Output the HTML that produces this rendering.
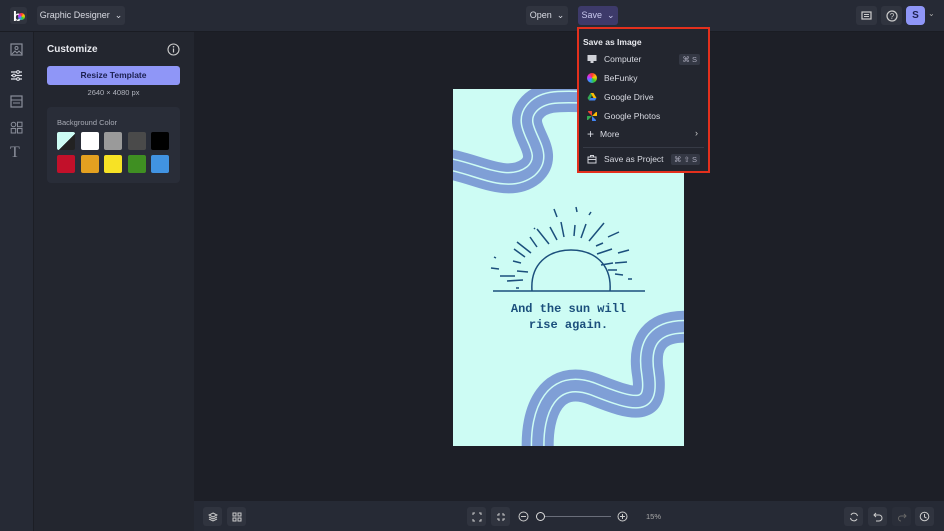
<!DOCTYPE html>
<html><head><meta charset="utf-8"><style>
*{margin:0;padding:0;box-sizing:border-box}
body{width:944px;height:531px;overflow:hidden;background:#1d1f27;font-family:"Liberation Sans",sans-serif;color:#d8dae2;position:relative}
.abs{position:absolute}
.top{left:0;top:0;width:944px;height:32px;background:#262a35;border-bottom:1px solid #1a1c23}
.btn{background:#30343f;border-radius:3px;font-size:9px;color:#d8dae2;display:flex;align-items:center;justify-content:center}
.rail{left:0;top:32px;width:34px;height:499px;background:#262a35;border-right:1px solid #1c1e25}
.panel{left:34px;top:32px;width:160px;height:499px;background:#23262f}
.bottom{left:194px;top:501px;width:750px;height:30px;background:#262a35}
.sw{position:absolute;width:18px;height:18px;border-radius:2px}
.menu{left:577px;top:27px;width:133px;height:146px;border:2px solid #e3301d;background:#23262f}
.mi{position:absolute;left:8px;font-size:8.5px;color:#d8dae2;display:flex;align-items:center}
.ic{width:10px;height:10px;margin-right:7px;display:inline-block}
.kb{position:absolute;right:8px;font-size:7.5px;background:#343844;color:#aab;padding:1px 3px;border-radius:2px}
svg{display:block}
</style></head><body>
<div class="abs top"></div>
<div class="abs" style="left:10px;top:7px;width:17px;height:17px;border-radius:3px;background:#30343f"></div>
<div class="abs" style="left:13px;top:9px;font-size:14px;font-weight:bold;color:#fff;line-height:14px">b</div>
<div class="abs" style="left:18px;top:13px;width:7px;height:7px;border-radius:50%;background:conic-gradient(#f33,#fc0,#3c3,#39f,#c3f,#f33)"></div>
<div class="abs btn" style="left:37px;top:6px;width:88px;height:19px">Graphic Designer &nbsp;⌄</div>
<div class="abs btn" style="left:526px;top:6px;width:42px;height:19px">Open &nbsp;⌄</div>
<div class="abs btn" style="left:578px;top:6px;width:40px;height:19px;background:#3d3a6a;color:#c8c8ee">Save &nbsp;⌄</div>
<div class="abs btn" style="left:856px;top:6px;width:21px;height:19px"><svg width="11" height="10" viewBox="0 0 11 10"><rect x="1" y="1" width="9" height="7" fill="none" stroke="#ccc" stroke-width="1.2"/><path d="M3 3.5h5M3 5.5h5" stroke="#ccc"/></svg></div>
<div class="abs btn" style="left:881px;top:6px;width:21px;height:19px"><svg width="12" height="12"><circle cx="6" cy="6" r="5" fill="none" stroke="#ccc" stroke-width="1.2"/><text x="6" y="9" font-size="8" text-anchor="middle" fill="#ccc" font-family="Liberation Sans">?</text></svg></div>
<div class="abs" style="left:906px;top:6px;width:19px;height:19px;border-radius:4px;background:#8f96f7;color:#1c2050;font-weight:bold;font-size:10px;text-align:center;line-height:19px">S</div>
<div class="abs" style="left:928px;top:9px;font-size:8px;color:#aaa">⌄</div>

<div class="abs rail"></div>
<svg class="abs" style="left:10px;top:43px" width="13" height="13"><rect x="1" y="1" width="11" height="11" fill="none" stroke="#8a8e9a" stroke-width="1.2"/><circle cx="6.5" cy="5" r="1.5" fill="none" stroke="#8a8e9a"/><path d="M2 11l3-3 2 2 2-2 3 3" fill="none" stroke="#8a8e9a"/></svg>
<svg class="abs" style="left:10px;top:69px" width="13" height="13"><path d="M1 3h11M1 6.5h11M1 10h11" stroke="#e0e2ea" stroke-width="1.2"/><circle cx="8" cy="3" r="1.4" fill="#262a35" stroke="#e0e2ea"/><circle cx="4" cy="6.5" r="1.4" fill="#262a35" stroke="#e0e2ea"/><circle cx="8" cy="10" r="1.4" fill="#262a35" stroke="#e0e2ea"/></svg>
<svg class="abs" style="left:10px;top:95px" width="13" height="13"><rect x="1" y="1" width="11" height="11" fill="none" stroke="#8a8e9a" stroke-width="1.2"/><path d="M1 5h11M3 8h7" stroke="#8a8e9a"/></svg>
<svg class="abs" style="left:10px;top:121px" width="13" height="13"><circle cx="3.5" cy="3.5" r="2.3" fill="none" stroke="#8a8e9a"/><rect x="7.5" y="1.2" width="4.5" height="4.5" fill="none" stroke="#8a8e9a"/><rect x="1.2" y="7.5" width="4.5" height="4.5" fill="none" stroke="#8a8e9a"/><rect x="7.5" y="7.5" width="4.5" height="4.5" fill="none" stroke="#8a8e9a"/></svg>
<div class="abs" style="left:10px;top:144px;font-family:'Liberation Serif',serif;font-size:16px;color:#8a8e9a">T</div>

<div class="abs panel"></div>
<div class="abs" style="left:47px;top:44px;font-size:10px;font-weight:bold;color:#e8e9ee">Customize</div>
<svg class="abs" style="left:167px;top:43px" width="13" height="13"><circle cx="6.5" cy="6.5" r="5.5" fill="none" stroke="#ccc" stroke-width="1.1"/><path d="M6.5 5.5v4" stroke="#ccc" stroke-width="1.2"/><circle cx="6.5" cy="3.8" r=".8" fill="#ccc"/></svg>
<div class="abs" style="left:47px;top:66px;width:133px;height:19px;border-radius:3px;background:#8f96f7;color:#1c2050;font-size:8.5px;font-weight:bold;text-align:center;line-height:19px">Resize Template</div>
<div class="abs" style="left:47px;top:88px;width:133px;text-align:center;font-size:7.5px;color:#b0b3bd">2640 × 4080 px</div>
<div class="abs" style="left:47px;top:107px;width:133px;height:76px;border-radius:4px;background:#292d38"></div>
<div class="abs" style="left:57px;top:118px;font-size:7.5px;color:#a8abb5">Background Color</div>
<div class="sw" style="left:57px;top:132px;background:linear-gradient(135deg,#cdfcf4 55%,#222 55%)"></div>
<div class="sw" style="left:81px;top:132px;background:#fff"></div>
<div class="sw" style="left:104px;top:132px;background:#9a9a9a"></div>
<div class="sw" style="left:128px;top:132px;background:#4a4a4a"></div>
<div class="sw" style="left:151px;top:132px;background:#000"></div>
<div class="sw" style="left:57px;top:155px;background:#c2102a"></div>
<div class="sw" style="left:81px;top:155px;background:#e3a020"></div>
<div class="sw" style="left:104px;top:155px;background:#f7e225"></div>
<div class="sw" style="left:128px;top:155px;background:#3f8f22"></div>
<div class="sw" style="left:151px;top:155px;background:#4193e2"></div>

<!-- canvas -->
<svg class="abs" style="left:453px;top:89px" width="231" height="357" viewBox="0 0 231 357">
<defs>
<path id="w1" d="M-5 75 C25 80 55 100 78 82 C100 62 62 40 78 20 C92 2 120 10 150 8"/>
<path id="w2" d="M85 365 C82 320 100 285 140 300 C185 318 200 320 195 285 C190 255 200 235 240 238"/>
</defs>
<rect width="231" height="357" fill="#cdfcf4"/>
<g fill="none">
<use href="#w1" stroke="#7f9fd6" stroke-width="30"/>
<use href="#w1" stroke="#cdfcf4" stroke-width="13"/>
<use href="#w1" stroke="#7f9fd6" stroke-width="10"/>
<use href="#w2" stroke="#7f9fd6" stroke-width="32"/>
<use href="#w2" stroke="#cdfcf4" stroke-width="14"/>
<use href="#w2" stroke="#7f9fd6" stroke-width="11"/>
</g>
<g stroke="#1b4f7c" stroke-width="1.5" fill="none">
<path d="M40 202 H192"/>
<path d="M79 202 C77 175 95 161 118 161 C141 161 159 175 157 202"/>
<path d="M96 155L84 140M104 151L97 138M111 148L108 133M121 147L122 136M128 149L133 135M136 152L151 134M143 157L150 154M72 168L61 160M78 164L64 153M84 158L77 148M68 174L60 172M144 165L159 160M162 174L174 173M148 176L160 174M155 181L164 181M75 183L64 182M62 187L47 187M70 191L54 192M66 199L63 199M46 180L38 179M43 169L41 168M82 140L81 139M104 128L101 120M124 123L123 118M138 123L136 126M155 148L166 143M176 161L165 164M162 185L170 186M175 190L179 190"/>
</g>
<text x="115.5" y="223" font-family="Liberation Mono,monospace" font-size="12" font-weight="bold" fill="#1b4f7c" text-anchor="middle">And the sun will</text>
<text x="115.5" y="239" font-family="Liberation Mono,monospace" font-size="12" font-weight="bold" fill="#1b4f7c" text-anchor="middle">rise again.</text>
</svg>

<!-- menu -->
<div class="abs menu">
<div class="abs" style="left:4px;top:8px;font-size:8.5px;font-weight:bold;color:#e8e9ee">Save as Image</div>
<div class="mi" style="top:25px"><svg class="ic" viewBox="0 0 10 10"><rect x="0.5" y="1" width="9" height="6" fill="#d0d2d8"/><rect x="3.5" y="7" width="3" height="2" fill="#d0d2d8"/></svg>Computer</div>
<div class="kb" style="top:25px">⌘ S</div>
<div class="mi" style="top:44px"><span class="ic" style="border-radius:50%;background:conic-gradient(#f33,#fc0,#3c3,#39f,#c3f,#f33)"></span>BeFunky</div>
<div class="mi" style="top:63px"><svg class="ic" viewBox="0 0 10 10"><path d="M3.5 1h3l3 5h-3z" fill="#fbbc04"/><path d="M3.5 1l-3 5 1.5 2.5 3-5z" fill="#34a853"/><path d="M2 8.5h6l1.5-2.5h-6z" fill="#4285f4"/></svg>Google Drive</div>
<div class="mi" style="top:82px"><svg class="ic" viewBox="0 0 10 10"><path d="M5 5V1a2 2 0 0 0-4 0z" fill="#ea4335"/><path d="M5 5h4a2 2 0 0 0 0-4z" fill="#fbbc04"/><path d="M5 5v4a2 2 0 0 0 4 0z" fill="#4285f4"/><path d="M5 5H1a2 2 0 0 0 0 4z" fill="#34a853"/></svg>Google Photos</div>
<div class="mi" style="top:100px"><span style="font-size:12px;margin-right:6px;line-height:10px">+</span>More</div>
<div class="abs" style="right:10px;top:99px;font-size:9px;color:#ccc">›</div>
<div class="abs" style="left:4px;right:4px;top:118px;height:1px;background:#363a45"></div>
<div class="mi" style="top:125px"><svg class="ic" viewBox="0 0 10 10"><rect x="1" y="3" width="8" height="6" fill="none" stroke="#d0d2d8"/><path d="M3.5 3V1.5h3V3M1 5.5h8" stroke="#d0d2d8" fill="none"/></svg>Save as Project</div>
<div class="kb" style="top:125px">⌘ ⇧ S</div>
</div>

<!-- bottom -->
<div class="abs bottom"></div>
<div class="abs btn" style="left:203px;top:507px;width:19px;height:19px"><svg width="10" height="10"><path d="M5 1L9 3 5 5 1 3z M1 5l4 2 4-2M1 7l4 2 4-2" fill="none" stroke="#ccc"/></svg></div>
<div class="abs btn" style="left:227px;top:507px;width:19px;height:19px"><svg width="10" height="10"><rect x="1" y="1" width="3" height="3" fill="none" stroke="#ccc"/><rect x="6" y="1" width="3" height="3" fill="none" stroke="#ccc"/><rect x="1" y="6" width="3" height="3" fill="none" stroke="#ccc"/><rect x="6" y="6" width="3" height="3" fill="none" stroke="#ccc"/></svg></div>
<div class="abs btn" style="left:467px;top:507px;width:19px;height:19px"><svg width="10" height="10"><path d="M1 3V1h2M7 1h2v2M9 7v2H7M3 9H1V7" fill="none" stroke="#ccc"/></svg></div>
<div class="abs btn" style="left:491px;top:507px;width:19px;height:19px"><svg width="10" height="10"><path d="M1 3h2V1M7 1v2h2M9 7H7v2M3 9V7H1" fill="none" stroke="#ccc"/></svg></div>
<svg class="abs" style="left:518px;top:511px" width="11" height="11"><circle cx="5.5" cy="5.5" r="4.5" fill="none" stroke="#ccc"/><path d="M3 5.5h5" stroke="#ccc"/></svg>
<div class="abs" style="left:540px;top:516px;width:71px;height:1px;background:#6a6e7a"></div>
<div class="abs" style="left:536px;top:512px;width:9px;height:9px;border-radius:50%;border:1.5px solid #ddd;background:#262a35"></div>
<svg class="abs" style="left:617px;top:511px" width="11" height="11"><circle cx="5.5" cy="5.5" r="4.5" fill="none" stroke="#ccc"/><path d="M3 5.5h5M5.5 3v5" stroke="#ccc"/></svg>
<div class="abs" style="left:646px;top:512px;font-size:7.5px;color:#aaa">15%</div>
<div class="abs btn" style="left:844px;top:507px;width:19px;height:19px"><svg width="10" height="10"><path d="M8.5 4A3.5 3.5 0 0 0 2 3M1.5 6A3.5 3.5 0 0 0 8 7" fill="none" stroke="#ccc"/></svg></div>
<div class="abs btn" style="left:868px;top:507px;width:19px;height:19px"><svg width="10" height="10"><path d="M3 1L1 3l2 2M1 3h5a3 3 0 0 1 0 6H3" fill="none" stroke="#ccc"/></svg></div>
<div class="abs btn" style="left:892px;top:507px;width:19px;height:19px;background:#2a2e39"><svg width="10" height="10"><path d="M7 2l2 2-2 2M9 4H4a2.5 2.5 0 0 0 0 5" fill="none" stroke="#666"/></svg></div>
<div class="abs btn" style="left:915px;top:507px;width:19px;height:19px"><svg width="11" height="11"><circle cx="5.5" cy="5.5" r="4.3" fill="none" stroke="#ccc"/><path d="M5.5 3v3l2 1" fill="none" stroke="#ccc"/></svg></div>
</body></html>
